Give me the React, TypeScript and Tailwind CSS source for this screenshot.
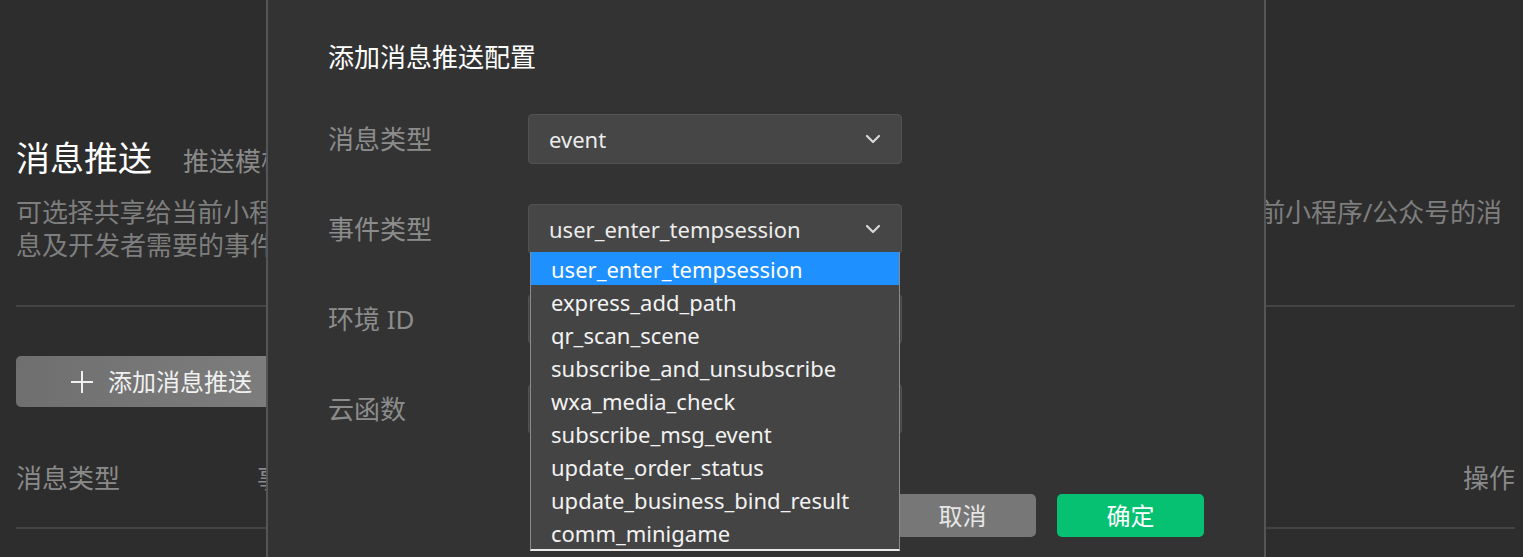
import React from "react";

const CJK = { fontFamily: '"Noto Sans", "Noto Sans CJK SC", sans-serif' };

const options = [
  "user_enter_tempsession",
  "express_add_path",
  "qr_scan_scene",
  "subscribe_and_unsubscribe",
  "wxa_media_check",
  "subscribe_msg_event",
  "update_order_status",
  "update_business_bind_result",
  "comm_minigame",
];

function Chevron() {
  return (
    <svg width="16" height="10" viewBox="0 0 16 10" className="shrink-0">
      <path d="M2 2 L8 8 L14 2" fill="none" stroke="#d8d8d8" strokeWidth="2.2" strokeLinecap="round" strokeLinejoin="round" />
    </svg>
  );
}

function Select({ value, children }: { value?: string; children?: React.ReactNode }) {
  return (
    <div className="relative w-[374px] h-[50px]">
      <div className="w-full h-full flex items-center justify-between bg-[#464646] border border-[#525252] rounded-[4px] pl-[20px] pr-[20px]">
        <span className="text-[22px] text-[#ececec] leading-none">{value}</span>
        {value !== undefined && <Chevron />}
      </div>
      {children}
    </div>
  );
}

export default function App() {
  return (
    <div className="relative w-[1523px] h-[557px] overflow-hidden bg-[#2d2d2d]" style={CJK}>
      {/* background page */}
      <div className="pl-4 pr-2 pt-[138px]">
        <div className="flex items-end h-[40px]">
          <span className="text-[34px] leading-[40px] text-white">消息推送</span>
          <span className="ml-[31px] text-[26px] leading-[34px] text-[#8a8a8a]">推送模板配置说明</span>
        </div>
        <div className="mt-[18px] text-[26px] leading-[33px] text-[#7e7e7e] whitespace-nowrap">
          <div className="tracking-[-0.1px]">可选择共享给当前小程序云开发环境，将符合条件的消息推送至指定云函数中进行处理，云函数接收推送给当前小程序/公众号的消</div>
          <div>息及开发者需要的事件推送，配置完成后即可生效。</div>
        </div>
        <div className="mt-[43px] h-[2px] bg-[#444444]" />
        <div className="mt-[49px]">
          <div className="w-[290px] h-[51px] rounded-[5px] bg-gradient-to-r from-[#6f6f6f] to-[#7f7f7f] flex items-center justify-center gap-[14px] text-[#f0f0f0]">
            <svg width="24" height="24" viewBox="0 0 24 24">
              <path d="M12 1 V23 M1 12 H23" stroke="#f0f0f0" strokeWidth="2" />
            </svg>
            <span className="text-[24px] leading-none">添加消息推送</span>
          </div>
        </div>
        <div className="mt-[55px] flex items-center h-[33px] text-[26px] leading-[33px] text-[#8a8a8a]">
          <span className="w-[241px]">消息类型</span>
          <span>事件类型</span>
          <span className="ml-auto">操作</span>
        </div>
        <div className="mt-[32px] h-[2px] bg-[#444444]" />
      </div>

      {/* dialog overlay */}
      <div className="absolute top-0 left-[266px] w-[1000px] h-[557px] bg-[#333333] border-x-2 border-[#555555] pl-[60px] pr-[60px] pt-[40px]">
        <div className="text-[26px] leading-[34px] text-white">添加消息推送配置</div>
        <div className="mt-[40px] flex flex-col gap-[40px]">
          <div className="flex items-center h-[50px]">
            <span className="w-[200px] text-[26px] text-[#8c8c8c]">消息类型</span>
            <Select value="event" />
          </div>
          <div className="flex items-center h-[50px] relative z-10">
            <span className="w-[200px] text-[26px] text-[#8c8c8c]">事件类型</span>
            <Select value="user_enter_tempsession">
              <div className="absolute left-[2px] top-[48px] w-[370px] bg-[#444444] border-x border-[#8a8a8a] border-b-2 border-b-[#e8e8e8]">
                {options.map((o, i) => (
                  <div
                    key={o}
                    className={
                      "h-[33px] flex items-center pl-[20px] text-[22px] leading-none " +
                      (i === 0 ? "bg-[#1e90ff] text-white" : "text-[#f2f2f2]")
                    }
                  >
                    {o}
                  </div>
                ))}
              </div>
            </Select>
          </div>
          <div className="flex items-center h-[50px]">
            <span className="w-[200px] text-[26px] text-[#8c8c8c]">环境 ID</span>
            <Select />
          </div>
          <div className="flex items-center h-[50px]">
            <span className="w-[200px] text-[26px] text-[#8c8c8c]">云函数</span>
            <Select />
          </div>
        </div>
        <div className="mt-[60px] flex justify-end gap-[21px]">
          <div className="w-[147px] h-[43px] rounded-[5px] bg-[#777777] flex items-center justify-center text-[24px] text-[#e6e6e6]">取消</div>
          <div className="w-[147px] h-[43px] rounded-[5px] bg-[#07c172] flex items-center justify-center text-[24px] text-white">确定</div>
        </div>
      </div>
    </div>
  );
}
